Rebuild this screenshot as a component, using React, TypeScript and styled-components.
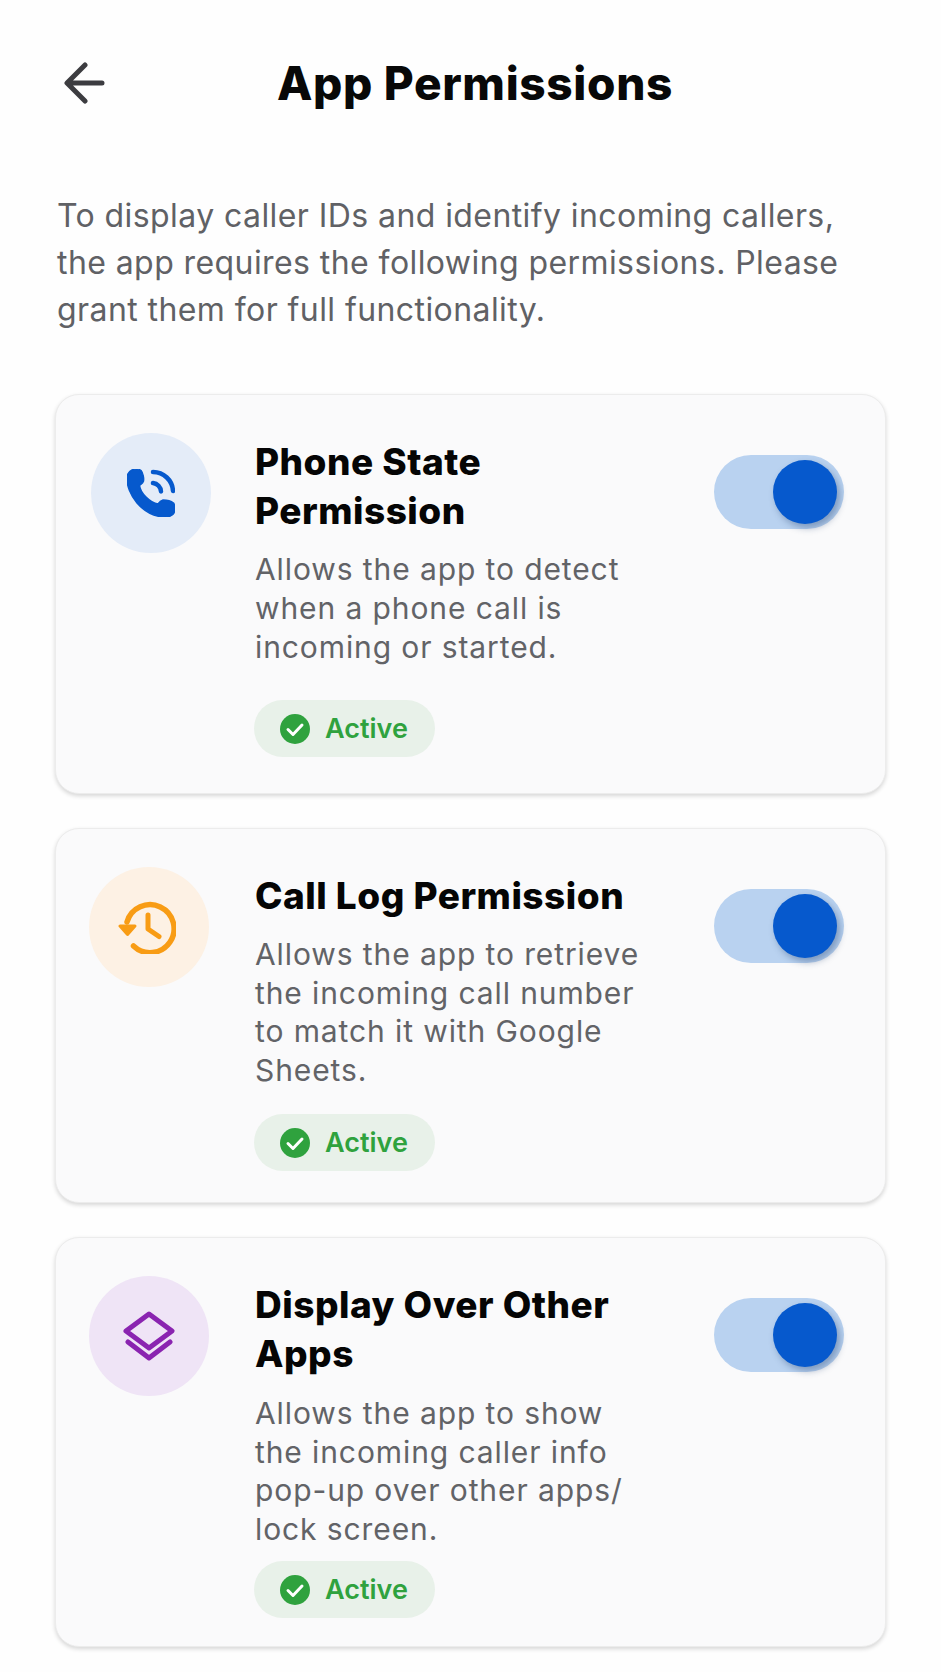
import type { ReactNode } from 'react';
import styled, { createGlobalStyle } from 'styled-components';

const GlobalStyle = createGlobalStyle`
  html, body {
    margin: 0;
    padding: 0;
    background: #fefefe;
  }
  * {
    box-sizing: border-box;
  }
`;

const Page = styled.main`
  width: 941px;
  height: 1672px;
  overflow: hidden;
  padding: 62px 55px 0;
  font-family: Inter, 'Liberation Sans', sans-serif;
`;

const Header = styled.header`
  display: flex;
  align-items: center;
  gap: 172px;
  height: 42px;
  padding-left: 9px;
`;

const BackButton = styled.button`
  display: flex;
  width: 41px;
  height: 42px;
  padding: 0;
  border: 0;
  background: none;
  color: #3c3c40;
`;

const Title = styled.h1`
  margin: 0;
  font-size: 46px;
  line-height: 52px;
  font-weight: 800;
  letter-spacing: 0.65px;
  color: #080808;
  white-space: nowrap;
`;

const Intro = styled.p`
  margin: 88px 0 0 2px;
  font-size: 32px;
  line-height: 47px;
  font-weight: 400;
  letter-spacing: 0.42px;
  color: #606165;
  white-space: pre-line;
`;

const CardList = styled.div`
  display: flex;
  flex-direction: column;
  gap: 34px;
  margin-top: 61px;
`;

const Card = styled.section<{ $height: number }>`
  display: grid;
  grid-template-columns: 120px 1fr 130px;
  column-gap: 44px;
  align-items: start;
  width: 831px;
  height: ${(props) => props.$height}px;
  padding: 38px 41px 0 35px;
  background: #fafafb;
  border: 1px solid #ececec;
  border-radius: 24px;
  box-shadow: 0 2px 4px rgba(0, 0, 0, 0.16);
`;

const IconCircle = styled.div<{ $bg: string; $color: string; $shift: number }>`
  display: flex;
  align-items: center;
  justify-content: center;
  width: 120px;
  height: 120px;
  margin-left: ${(props) => props.$shift}px;
  border-radius: 50%;
  background: ${(props) => props.$bg};
  color: ${(props) => props.$color};
`;

const Body = styled.div`
  display: flex;
  flex-direction: column;
  align-items: flex-start;
  padding-top: 4px;
`;

const CardTitle = styled.h2`
  margin: 0;
  font-size: 37px;
  line-height: 49px;
  font-weight: 800;
  letter-spacing: 0.5px;
  color: #050505;
  white-space: pre-line;
`;

const Description = styled.p<{ $lineHeight: number; $top: number }>`
  margin: ${(props) => props.$top}px 0 0;
  font-size: 30px;
  line-height: ${(props) => props.$lineHeight}px;
  font-weight: 400;
  letter-spacing: 0.9px;
  color: #626367;
  white-space: pre-line;
`;

const StatusBadge = styled.div<{ $top: number }>`
  display: flex;
  align-items: center;
  gap: 15px;
  width: 181px;
  height: 57px;
  margin: ${(props) => props.$top}px 0 0 -1px;
  padding-left: 26px;
  border-radius: 29px;
  background: #e8f1e9;
  color: #2fa23e;
  font-size: 27px;
  font-weight: 600;
`;

const Toggle = styled.div`
  position: relative;
  width: 130px;
  height: 74px;
  margin-top: 22px;
  border-radius: 37px;
  background: #b9d2f0;
`;

const ToggleThumb = styled.span`
  position: absolute;
  top: 5px;
  right: 7px;
  width: 64px;
  height: 64px;
  border-radius: 50%;
  background: #0659cd;
  box-shadow: 3px 4px 7px rgba(30, 60, 110, 0.38);
`;

const HistorySvg = styled.svg`
  margin-left: -4px;
`;

const BackArrow = () => (
  <svg width='41' height='42' viewBox='0 0 41 42' fill='none' stroke='currentColor' strokeWidth='5' strokeLinecap='round' strokeLinejoin='round'>
    <path d='M38 21H4M21 3 3 21l18 18' />
  </svg>
);

const PhoneIcon = () => (
  <svg width='48' height='48' viewBox='0 0 48 48'>
    <path
      fill='currentColor'
      stroke='currentColor'
      strokeWidth='1.5'
      strokeLinejoin='round'
      d='M5 1C8-.5 12 0 14 1.500c2 2.500 3 7.500 2.500 10.500-.5 2-3 3.500-4 4.500.5 3.500 2.500 7.500 6.500 11.500s8.500 6.500 12 7c1-1.500 2.500-3.500 5-4 4 0 8 1 10.500 3 1.500 2 1.500 7 .5 10-1.500 3.500-6 4-10 4-10-.5-20-6-27-14C3.500 26-.5 16 0 9c0-4 2-6.500 5-8Z'
    />
    <path
      fill='none'
      stroke='currentColor'
      strokeWidth='4.5'
      strokeLinecap='round'
      d='M26 3a20 20 0 0 1 20 19M26 14a9 9 0 0 1 8 8.500'
    />
  </svg>
);

const HistoryIcon = () => (
  <HistorySvg width='58' height='54' viewBox='0 0 58 54' fill='none'>
    <path
      stroke='currentColor'
      strokeWidth='5.5'
      strokeLinecap='round'
      d='M9 22A24 24 0 1 1 15.500 46'
    />
    <path fill='currentColor' stroke='currentColor' strokeWidth='3' strokeLinejoin='round' d='M2 26h15l-7.500 8.500Z' />
    <path stroke='currentColor' strokeWidth='5' strokeLinecap='round' strokeLinejoin='round' d='M30 15v14l11 7.500' />
  </HistorySvg>
);

const LayersIcon = () => (
  <svg width='52' height='50' viewBox='0 0 52 50' fill='none' stroke='currentColor' strokeWidth='5' strokeLinecap='round' strokeLinejoin='round'>
    <path d='M26 3 49 20 26 37 3 20Z' />
    <path d='M5 31 26 47 47 31' />
  </svg>
);

const CheckIcon = () => (
  <svg width='30' height='30' viewBox='0 0 30 30'>
    <circle cx='15' cy='15' r='15' fill='currentColor' />
    <path d='m8 15.500 5 5 9-9.500' fill='none' stroke='#fff' strokeWidth='3' strokeLinecap='round' strokeLinejoin='round' />
  </svg>
);

type Permission = {
  title: string;
  description: string;
  icon: ReactNode;
  iconBg: string;
  iconColor: string;
  iconShift: number;
  height: number;
  lineHeight: number;
  descTop: number;
  badgeTop: number;
};

const PERMISSIONS: Permission[] = [
  {
    title: 'Phone State\nPermission',
    description: 'Allows the app to detect\nwhen a phone call is\nincoming or started.',
    icon: <PhoneIcon />,
    iconBg: '#e4ecf8',
    iconColor: '#0659cd',
    iconShift: 0,
    height: 400,
    lineHeight: 39,
    descTop: 15,
    badgeTop: 33,
  },
  {
    title: 'Call Log Permission',
    description: 'Allows the app to retrieve\nthe incoming call number\nto match it with Google\nSheets.',
    icon: <HistoryIcon />,
    iconBg: '#fdf1e4',
    iconColor: '#f89c14',
    iconShift: -2,
    height: 375,
    lineHeight: 38.5,
    descTop: 15,
    badgeTop: 25,
  },
  {
    title: 'Display Over Other\nApps',
    description: 'Allows the app to show\nthe incoming caller info\npop-up over other apps/\nlock screen.',
    icon: <LayersIcon />,
    iconBg: '#efe4f6',
    iconColor: '#8a24b0',
    iconShift: -2,
    height: 410,
    lineHeight: 38.5,
    descTop: 16,
    badgeTop: 13,
  },
];

const App = () => (
  <Page>
    <GlobalStyle />
    <Header>
      <BackButton aria-label='Back'>
        <BackArrow />
      </BackButton>
      <Title>App Permissions</Title>
    </Header>
    <Intro>
      {'To display caller IDs and identify incoming callers,\nthe app requires the following permissions. Please\ngrant them for full functionality.'}
    </Intro>
    <CardList>
      {PERMISSIONS.map((item) => (
        <Card key={item.title} $height={item.height}>
          <IconCircle $bg={item.iconBg} $color={item.iconColor} $shift={item.iconShift}>
            {item.icon}
          </IconCircle>
          <Body>
            <CardTitle>{item.title}</CardTitle>
            <Description $lineHeight={item.lineHeight} $top={item.descTop}>
              {item.description}
            </Description>
            <StatusBadge $top={item.badgeTop}>
              <CheckIcon />
              Active
            </StatusBadge>
          </Body>
          <Toggle>
            <ToggleThumb />
          </Toggle>
        </Card>
      ))}
    </CardList>
  </Page>
);

export default App;
